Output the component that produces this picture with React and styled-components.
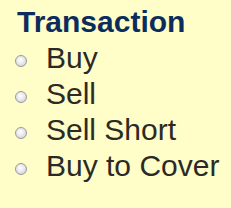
import styled, { createGlobalStyle } from 'styled-components'

const GlobalStyle = createGlobalStyle`
  html, body {
    margin: 0;
    padding: 0;
    background: #fffdc8;
  }
`

const Panel = styled.fieldset`
  margin: 0;
  border: 0;
  padding: 4px 0 0 17px;
  width: 231px;
  height: 208px;
  box-sizing: border-box;
  font-family: "Liberation Sans", Arial, sans-serif;
`

const Title = styled.legend`
  padding: 0;
  float: left;
  width: 100%;
  font-size: 30px;
  font-weight: 700;
  line-height: 35px;
  color: #0c2d5c;
`

const Options = styled.div`
  clear: both;
  display: flex;
  flex-direction: column;
  padding-top: 1px;
`

const Option = styled.label`
  display: flex;
  align-items: center;
  height: 36px;
  margin-left: -2px;
  font-size: 30px;
  color: #2b2a25;
  cursor: pointer;
`

const Radio = styled.input.attrs({ type: 'radio' })`
  appearance: none;
  margin: 6px 19px 0 0;
  width: 12px;
  height: 12px;
  border-radius: 50%;
  border: 1px solid #9a9a9a;
  background: radial-gradient(circle at 45% 40%, #ffffff 0%, #e9e9ee 45%, #c6c6cc 100%);
  box-sizing: border-box;
  flex-shrink: 0;
`

const options = ['Buy', 'Sell', 'Sell Short', 'Buy to Cover']

export default function App() {
  return (
    <>
      <GlobalStyle />
      <Panel>
        <Title>Transaction</Title>
        <Options>
          {options.map((o) => (
            <Option key={o}>
              <Radio name="transaction" value={o} />
              {o}
            </Option>
          ))}
        </Options>
      </Panel>
    </>
  )
}
